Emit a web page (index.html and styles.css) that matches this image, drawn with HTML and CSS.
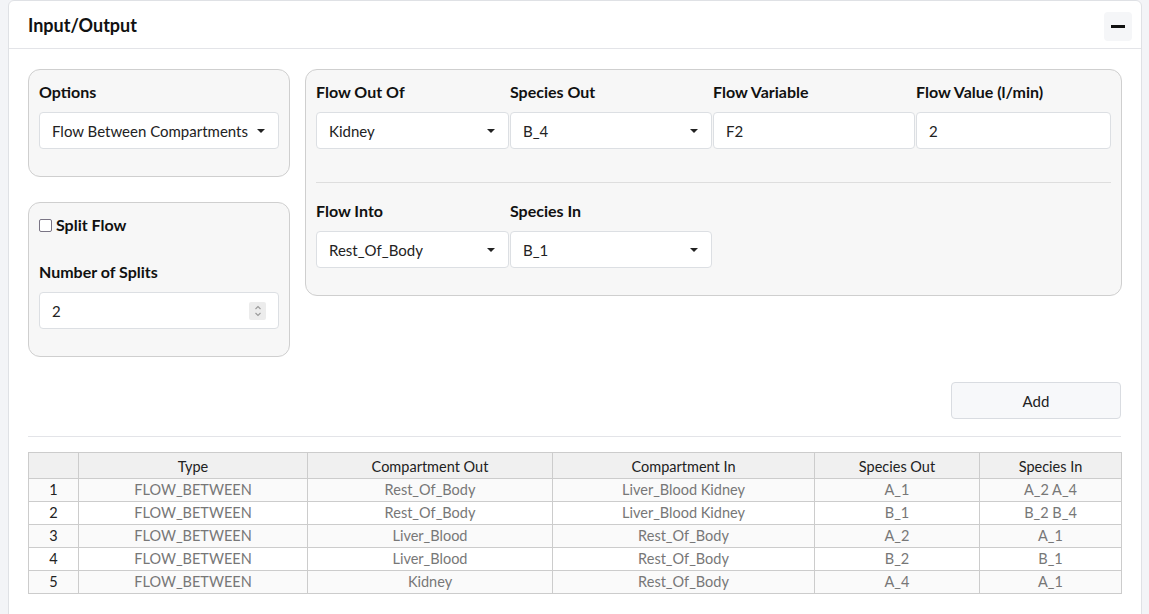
FILE: index.html
```html
<!DOCTYPE html>
<html lang="en">
<head>
<meta charset="utf-8">
<title>Input/Output</title>
<link rel="stylesheet" href="styles.css">
</head>
<body>
<div class="card">
  <div class="card-header">
    <span class="card-title">Input/Output</span>
    <button class="collapse-btn" aria-label="Collapse"><span class="minus"></span></button>
  </div>
  <div class="card-body">
    <div class="main-row">
      <div class="left-col">
        <div class="well well-options">
          <div class="label">Options</div>
          <div class="select">Flow Between Compartments<span class="caret"></span></div>
        </div>
        <div class="well well-split">
          <label class="check-row"><span class="checkbox"></span><span class="label">Split Flow</span></label>
          <div class="label label-splits">Number of Splits</div>
          <div class="input number">2<span class="spinner"><svg width="10" height="14" viewBox="0 0 10 14"><path d="M2.5 5 L5 2.5 L7.5 5" fill="none" stroke="#9a9a9a" stroke-width="1.1"/><path d="M2.5 9 L5 11.5 L7.5 9" fill="none" stroke="#9a9a9a" stroke-width="1.1"/></svg></span></div>
        </div>
      </div>
      <div class="well well-flow">
        <div class="flow-grid">
          <div class="field"><div class="label">Flow Out Of</div><div class="select">Kidney<span class="caret"></span></div></div>
          <div class="field"><div class="label">Species Out</div><div class="select">B_4<span class="caret"></span></div></div>
          <div class="field"><div class="label">Flow Variable</div><div class="input">F2</div></div>
          <div class="field"><div class="label">Flow Value (l/min)</div><div class="input">2</div></div>
        </div>
        <div class="divider"></div>
        <div class="flow-grid">
          <div class="field"><div class="label">Flow Into</div><div class="select">Rest_Of_Body<span class="caret"></span></div></div>
          <div class="field"><div class="label">Species In</div><div class="select">B_1<span class="caret"></span></div></div>
        </div>
      </div>
    </div>
    <div class="add-row"><button class="add-btn">Add</button></div>
    <div class="hr"></div>
    <table class="grid">
      <colgroup>
        <col class="c0"><col class="c1"><col class="c2"><col class="c3"><col class="c4"><col class="c5">
      </colgroup>
      <thead>
        <tr><th></th><th>Type</th><th>Compartment Out</th><th>Compartment In</th><th>Species Out</th><th>Species In</th></tr>
      </thead>
      <tbody>
        <tr><td class="rh">1</td><td>FLOW_BETWEEN</td><td>Rest_Of_Body</td><td>Liver_Blood Kidney</td><td>A_1</td><td>A_2 A_4</td></tr>
        <tr><td class="rh">2</td><td>FLOW_BETWEEN</td><td>Rest_Of_Body</td><td>Liver_Blood Kidney</td><td>B_1</td><td>B_2 B_4</td></tr>
        <tr><td class="rh">3</td><td>FLOW_BETWEEN</td><td>Liver_Blood</td><td>Rest_Of_Body</td><td>A_2</td><td>A_1</td></tr>
        <tr><td class="rh">4</td><td>FLOW_BETWEEN</td><td>Liver_Blood</td><td>Rest_Of_Body</td><td>B_2</td><td>B_1</td></tr>
        <tr><td class="rh">5</td><td>FLOW_BETWEEN</td><td>Kidney</td><td>Rest_Of_Body</td><td>A_4</td><td>A_1</td></tr>
      </tbody>
    </table>
  </div>
</div>
</body>
</html>
```

FILE: styles.css
```css
* { box-sizing: border-box; }
html, body { margin: 0; }
body {
  background: #f3f4f7;
  padding: 0 7px 0 8px;
  font-family: Lato, "Open Sans", sans-serif;
  font-size: 16px;
  color: #1d1f21;
}
.card {
  background: #fff;
  border: 1px solid #dfe1e5;
  border-radius: 6px;
  min-height: 630px;
}
.card-header {
  height: 48px;
  border-bottom: 1px solid #e3e4e8;
  display: flex;
  align-items: center;
  justify-content: space-between;
  padding: 0 9px 0 19px;
}
.card-title { font-weight: 700; font-size: 18px; color: #111; }
.collapse-btn {
  width: 28px; height: 29px;
  border: none; border-radius: 4px;
  background: #f5f6f8;
  display: flex; align-items: center; justify-content: center;
  padding: 0; margin-top: 4px;
}
.minus { width: 14px; height: 3px; background: #111; display: block; }
.card-body { padding: 20px 20px 20px 19px; }
.main-row { display: flex; gap: 15px; align-items: flex-start; }
.left-col { width: 262px; display: flex; flex-direction: column; gap: 25px; flex: none; }
.well {
  background: #f7f7f7;
  border: 1px solid #cfcfcf;
  border-radius: 12px;
  padding: 11px 10px 27px;
}
.well-flow { flex: 1; }
.label { font-weight: 700; font-size: 16px; line-height: 22px; margin-bottom: 9px; color: #111; }
.select, .input {
  position: relative;
  height: 37px;
  background: #fff;
  border: 1px solid #dcdfe3;
  border-radius: 4px;
  padding: 0 12px;
  display: flex; align-items: center;
  font-size: 15px;
  color: #222;
  white-space: nowrap;
}
.caret {
  position: absolute;
  right: 13px; top: 16px;
  width: 0; height: 0;
  border-left: 4px solid transparent;
  border-right: 4px solid transparent;
  border-top: 4px solid #222;
}
.check-row { display: flex; align-items: center; gap: 4px; height: 22px; }
.check-row .label { margin: 0; }
.checkbox {
  width: 13px; height: 13px;
  border: 1.5px solid #7a7585;
  border-radius: 2px;
  background: #fff;
}
.label-splits { margin-top: 25px; }
.spinner {
  position: absolute; right: 12px; top: 9px;
  width: 17px; height: 18px;
  background: #ececec;
  border-radius: 2px;
  display: flex; align-items: center; justify-content: center;
}
.flow-grid { display: grid; grid-template-columns: 193px 202px 202px 195px; gap: 1px; }
.divider { height: 1px; background: #dedede; margin: 33px 0 17px; }
.add-row { display: flex; justify-content: flex-end; margin-top: 25px; }
.add-btn {
  width: 170px; height: 37px;
  background: #f7f8fa;
  border: 1px solid #d9dce1;
  border-radius: 4px;
  font-family: inherit; font-size: 15px; color: #222;
}
.hr { height: 1px; background: #e3e4e8; margin: 17px 0 15px; }
.grid {
  width: 1093px;
  border-collapse: collapse;
  table-layout: fixed;
  font-size: 14.5px;
}
.c0 { width: 50px; } .c1 { width: 229px; } .c2 { width: 245px; }
.c3 { width: 262px; } .c4 { width: 165px; } .c5 { width: 142px; }
.grid th, .grid td {
  border: 1px solid #cccccc;
  text-align: center;
  padding: 0 4px;
  white-space: nowrap;
}
.grid th { background: #f0f0f0; font-weight: 400; color: #222; height: 26px; padding-top: 2px; }
.grid td { height: 23px; color: #777; line-height: 20px; }
.grid tbody tr:nth-child(odd) td { background: #fafafa; }
.grid tbody tr:nth-child(even) td { background: #fff; }
.grid tbody td.rh { background: #f0f0f0; color: #222; }
```
